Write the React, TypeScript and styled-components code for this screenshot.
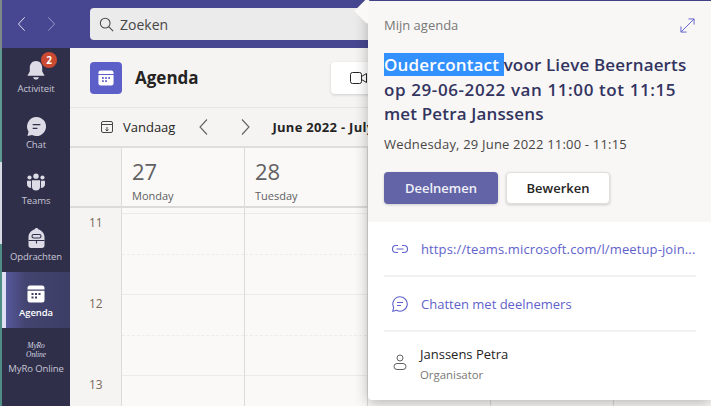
import * as React from "react";
import styled, { createGlobalStyle } from "styled-components";

const GlobalStyle = createGlobalStyle`
	html, body {
		margin: 0;
		padding: 0;
		background: #f5f4f3;
	}
	* {
		box-sizing: border-box;
	}
`;

const Window = styled.div`
	position: relative;
	display: flex;
	width: 711px;
	height: 406px;
	overflow: hidden;
	font-family: "Open Sans", "Noto Sans", sans-serif;
	color: #252423;
`;

const DesktopEdge = styled.div`
	flex: 0 0 2px;
	background: linear-gradient(#7d8a8a 0 12%, #5f9a92 12% 40%, #d7dbe3 40% 60%, #4f8d86 60% 100%);
`;

const Shell = styled.div`
	flex: 1;
	display: flex;
	flex-direction: column;
	min-width: 0;
`;

const TopBar = styled.header`
	flex: 0 0 48px;
	display: flex;
	align-items: center;
	background: #464790;
`;

const HistoryNav = styled.div`
	flex: 0 0 88px;
	display: flex;
	align-items: center;
	gap: 13px;
	padding-left: 12px;
`;

const SearchBox = styled.div`
	width: 300px;
	height: 32px;
	display: flex;
	align-items: center;
	gap: 6px;
	padding-left: 9px;
	background: #ebebeb;
	border-radius: 4px 0 0 4px;
	font-size: 14px;
	color: #484644;
`;

const Body = styled.div`
	flex: 1;
	display: flex;
	min-height: 0;
`;

const Rail = styled.nav`
	flex: 0 0 68px;
	display: flex;
	flex-direction: column;
	background: #2f2f4a;
`;

const RailItem = styled.div<{ $active?: boolean }>`
	position: relative;
	height: 56px;
	display: flex;
	flex-direction: column;
	align-items: center;
	padding-top: 10px;
	font-size: 9.5px;
	line-height: 13px;
	letter-spacing: -0.1px;
	color: ${(p) => (p.$active ? "#ffffff" : "#c8c6d4")};
	font-weight: ${(p) => (p.$active ? 600 : 400)};
	background: ${(p) => (p.$active ? "linear-gradient(90deg, #5a5ca6 0%, #43446f 35%, #3d3e66 100%)" : "transparent")};
	box-shadow: ${(p) => (p.$active ? "inset 4px 0 0 #dfe0f3" : "none")};
`;

const RailIcon = styled.div`
	height: 24px;
	display: flex;
	align-items: center;
	justify-content: center;
`;

const Badge = styled.span`
	position: absolute;
	top: 4px;
	left: 39px;
	width: 16px;
	height: 16px;
	border-radius: 50%;
	background: #cc4a31;
	color: #fff;
	font-size: 10px;
	font-weight: 700;
	line-height: 16px;
	text-align: center;
`;

const MyRoLogo = styled.div`
	font-family: "Liberation Serif", serif;
	font-style: italic;
	font-size: 7.5px;
	line-height: 9px;
	text-align: center;
	color: #d8d7e2;
`;

const Main = styled.main`
	flex: 1;
	display: flex;
	flex-direction: column;
	min-width: 0;
`;

const PageHeader = styled.div`
	flex: 0 0 60px;
	display: flex;
	align-items: center;
	padding-left: 20px;
	background: #f5f4f3;
	border-bottom: 1px solid #e6e5e4;
`;

const AppTile = styled.div`
	width: 32px;
	height: 32px;
	display: flex;
	align-items: center;
	justify-content: center;
	border-radius: 4px;
	background: #5b5fc7;
`;

const PageTitle = styled.h1`
	margin: 0 0 0 13px;
	width: 196px;
	font-size: 17px;
	font-weight: 700;
	color: #252423;
`;

const MeetButton = styled.div`
	width: 60px;
	height: 32px;
	display: flex;
	align-items: center;
	padding-left: 19px;
	background: #fff;
	border-radius: 4px;
	box-shadow: 0 1px 3px rgba(0, 0, 0, 0.16);
`;

const Toolbar = styled.div`
	flex: 0 0 40px;
	display: flex;
	align-items: center;
	padding-left: 30px;
	background: #f5f4f3;
	border-bottom: 2px solid #dfdedd;
	font-size: 13px;
`;

const TodayLabel = styled.span`
	margin: 0 20px 0 9px;
`;

const WeekArrows = styled.div`
	display: flex;
	align-items: center;
	gap: 23px;
	margin-right: 18px;
`;

const RangeLabel = styled.span`
	font-weight: 700;
	letter-spacing: 0.3px;
	white-space: nowrap;
`;

const Calendar = styled.div`
	flex: 1;
	display: grid;
	grid-template-columns: 51px 123px 123px 123px 123px 123px;
	grid-template-rows: 60px 1fr;
	background: #faf9f8;
	min-height: 0;
`;

const DayHead = styled.div<{ $corner?: boolean }>`
	padding: 9px 0 0 10px;
	background: ${(p) => (p.$corner ? "#f5f4f3" : "#faf9f8")};
	border-left: ${(p) => (p.$corner ? "0" : "1px solid #dcdbda")};
	border-bottom: 2px solid #dcdbda;
`;

const DayNumber = styled.div`
	font-size: 22px;
	line-height: 28px;
	color: #616161;
`;

const DayName = styled.div`
	margin-top: 3px;
	font-size: 11px;
	line-height: 15px;
	color: #616161;
`;

const HourColumn = styled.div`
	display: flex;
	flex-direction: column;
	background: #f5f4f3;
`;

const HourLabel = styled.div`
	flex: 0 0 81px;
	padding: 7px 0 0 19px;
	font-size: 12px;
	line-height: 16px;
	color: #7a6a5a;
`;

const DayColumn = styled.div`
	display: flex;
	flex-direction: column;
	padding-top: 5px;
	border-left: 1px solid #dcdbda;
`;

const Slot = styled.div<{ $half?: boolean }>`
	flex: 0 0 40.5px;
	border-top: 1px ${(p) => (p.$half ? "dashed #eeedec" : "solid #ecebea")};
`;

const Popover = styled.aside`
	position: absolute;
	top: 1px;
	left: 368px;
	width: 343px;
	height: 399px;
	display: flex;
	flex-direction: column;
	background: #fff;
	border-radius: 0 0 0 4px;
	box-shadow: 0 3px 14px rgba(0, 0, 0, 0.28);

	&::before {
		content: "";
		position: absolute;
		top: 1px;
		left: -10px;
		width: 18px;
		height: 18px;
		background: #faf9f8;
		transform: rotate(45deg);
	}
`;

const PopoverTop = styled.div`
	position: relative;
	flex: 0 0 221px;
	padding: 14px 16px 0;
	background: #f8f7f6;
`;

const PopoverMeta = styled.div`
	display: flex;
	align-items: center;
	justify-content: space-between;
	height: 20px;
	font-size: 13px;
	color: #7a7876;
`;

const EventTitle = styled.h2`
	margin: 18px 0 0;
	font-size: 17px;
	line-height: 24.5px;
	font-weight: 600;
	color: #33345f;
	white-space: nowrap;
`;

const TitleLine = styled.span<{ $spacing?: number }>`
	display: block;
	letter-spacing: ${(p) => p.$spacing ?? 0}px;
`;

const Selected = styled.span`
	background: #3390ff;
	color: #fff;
`;

const EventTime = styled.div`
	margin-top: 9px;
	font-size: 13px;
	line-height: 16px;
	letter-spacing: 0.19px;
	color: #484644;
`;

const Actions = styled.div`
	display: flex;
	gap: 8px;
	margin-top: 20px;
`;

const Button = styled.button<{ $primary?: boolean }>`
	height: 32px;
	width: ${(p) => (p.$primary ? "114px" : "104px")};
	padding: 0;
	border: ${(p) => (p.$primary ? "0" : "1px solid #e1dfdd")};
	border-radius: 4px;
	background: ${(p) => (p.$primary ? "#6264a7" : "#fff")};
	color: ${(p) => (p.$primary ? "#f0f0f8" : "#252423")};
	font-family: inherit;
	font-size: 13px;
	font-weight: 600;
	box-shadow: 0 1px 3px rgba(0, 0, 0, 0.18);
`;

const DetailList = styled.div`
	flex: 1;
	display: flex;
	flex-direction: column;
	padding: 0 15px 0 16px;
`;

const DetailRow = styled.div<{ $link?: boolean; $tall?: boolean }>`
	flex: ${(p) => (p.$tall ? "1" : "0 0 55px")};
	display: flex;
	align-items: ${(p) => (p.$tall ? "flex-start" : "center")};
	gap: ${(p) => (p.$tall ? "12px" : "13px")};
	padding: ${(p) => (p.$tall ? "13px 0 0 8px" : "0 0 0 8px")};
	color: ${(p) => (p.$link ? "#5f62cc" : "#252423")};
	font-size: 13px;
	border-bottom: ${(p) => (p.$link ? "2px solid #f3f2f1" : "0")};
	white-space: nowrap;
`;

const LinkText = styled.span`
	letter-spacing: 0.12px;
`;

const IconSlot = styled.span<{ $down?: boolean }>`
	display: flex;
	margin-top: ${(p) => (p.$down ? "9px" : "0")};
`;

const SubLabel = styled.div`
	margin-top: 4px;
	font-size: 11.4px;
	color: #7a7876;
`;

function Chevron({ dir, color, size = 18 }: { dir: "left" | "right"; color: string; size?: number }) {
	return (
		<svg width={size} height={size} viewBox="0 0 18 18" fill="none" stroke={color} strokeWidth="1.1">
			<path d={dir === "left" ? "M12 1.500 L5 9 L12 16.500" : "M6 1.500 L13 9 L6 16.500"} />
		</svg>
	);
}

function BellIcon() {
	return (
		<svg width="20" height="21" viewBox="0 0 20 22" fill="#dcdbe6">
			<path d="M10 1c4 0 6.500 3 6.500 7v4l2.500 4.500H1L3.500 12V8C3.500 4 6 1 10 1z" />
			<path d="M7 18h6c-.4 1.500-1.500 2.500-3 2.500S7.400 19.500 7 18z" />
		</svg>
	);
}

function ChatIcon() {
	return (
		<svg width="21" height="21" viewBox="0 0 22 22">
			<path fill="#dcdbe6" d="M11 1a10 10 0 1 1-4.600 18.900L1.500 21l1.200-4.600A10 10 0 0 1 11 1z" />
			<path stroke="#2f2f4a" strokeWidth="1.400" d="M7 9h8M7 13h5" />
		</svg>
	);
}

function TeamsIcon() {
	return (
		<svg width="20" height="18" viewBox="0 0 22 20" fill="#dcdbe6">
			<circle cx="11" cy="3.500" r="3" />
			<circle cx="3.800" cy="5" r="2.300" />
			<circle cx="18.200" cy="5" r="2.300" />
			<path d="M6.500 8h9v7a4.500 4.500 0 0 1-9 0z" />
			<path d="M1 8.500h4.500V15c0 .7.100 1.300.3 1.800C3 16.800 1 15 1 12.500zM21 8.500h-4.500V15c0 .7-.1 1.300-.3 1.800 2.800 0 4.800-1.800 4.800-4.300z" />
		</svg>
	);
}

function BackpackIcon() {
	return (
		<svg width="17" height="20" viewBox="0 0 17 20">
			<path fill="#dcdbe6" d="M8.500 0c.8 0 1.400.5 1.700 1.200C13.800 2.300 16.500 5.400 16.500 9v8.500c0 1.300-1 2.500-2.500 2.500H3c-1.500 0-2.500-1.200-2.500-2.500V9c0-3.600 2.700-6.700 6.300-7.800C7.100.5 7.700 0 8.500 0z" />
			<rect x="4" y="6.500" width="9" height="3.500" rx="1.750" fill="none" stroke="#2f2f4a" strokeWidth="1.100" />
			<path stroke="#2f2f4a" strokeWidth="1.100" fill="none" d="M.5 12.500h16M8.500 12.500v3" />
		</svg>
	);
}

function CalendarGlyph({ size, color, dots }: { size: number; color: string; dots: string }) {
	return (
		<svg width={size} height={size} viewBox="0 0 18 18">
			<path fill={color} d="M3 0.500h12A2.500 2.500 0 0 1 17.500 3v1.500H.5V3A2.500 2.500 0 0 1 3 .5z" />
			<path fill={color} d="M.5 5.700h17V15a2.500 2.500 0 0 1-2.500 2.500H3A2.500 2.500 0 0 1 .5 15z" />
			<g fill={dots}>
				<rect x="4.500" y="8" width="2" height="2" />
				<rect x="8" y="8" width="2" height="2" />
				<rect x="11.500" y="8" width="2" height="2" />
				<rect x="4.500" y="11.500" width="2" height="2" />
				<rect x="8" y="11.500" width="2" height="2" />
			</g>
		</svg>
	);
}

const hours = ["11", "12", "13"];
const slots = [false, true, false, true, false, true, false];

function DayCol() {
	return (
		<DayColumn>
			{slots.map((half, i) => (
				<Slot key={i} $half={half} />
			))}
		</DayColumn>
	);
}

export default function App() {
	return (
		<Window>
			<GlobalStyle />
			<DesktopEdge />
			<Shell>
				<TopBar>
					<HistoryNav>
						<Chevron dir="left" color="#e4e4f2" size={16} />
						<Chevron dir="right" color="#9a9bcb" size={16} />
					</HistoryNav>
					<SearchBox>
						<svg width="15" height="15" viewBox="0 0 17 17" fill="none" stroke="#484644" strokeWidth="1.200">
							<circle cx="7" cy="7" r="5.500" />
							<path d="M11 11l5 5" />
						</svg>
						Zoeken
					</SearchBox>
				</TopBar>
				<Body>
					<Rail>
						<RailItem>
							<RailIcon>
								<BellIcon />
							</RailIcon>
							Activiteit
							<Badge>2</Badge>
						</RailItem>
						<RailItem>
							<RailIcon>
								<ChatIcon />
							</RailIcon>
							Chat
						</RailItem>
						<RailItem>
							<RailIcon>
								<TeamsIcon />
							</RailIcon>
							Teams
						</RailItem>
						<RailItem>
							<RailIcon>
								<BackpackIcon />
							</RailIcon>
							Opdrachten
						</RailItem>
						<RailItem $active>
							<RailIcon>
								<CalendarGlyph size={18} color="#ffffff" dots="#3d3e66" />
							</RailIcon>
							Agenda
						</RailItem>
						<RailItem>
							<RailIcon>
								<MyRoLogo>
									MyRo
									<br />
									Online
								</MyRoLogo>
							</RailIcon>
							MyRo Online
						</RailItem>
					</Rail>
					<Main>
						<PageHeader>
							<AppTile>
								<CalendarGlyph size={16} color="#ffffff" dots="#5b5fc7" />
							</AppTile>
							<PageTitle>Agenda</PageTitle>
							<MeetButton>
								<svg width="18" height="12" viewBox="0 0 18 12" fill="none" stroke="#252423" strokeWidth="1">
									<rect x="0.500" y="0.500" width="11" height="11" rx="2" />
									<path d="M11.500 4.500l5-3v9l-5-3" />
								</svg>
							</MeetButton>
						</PageHeader>
						<Toolbar>
							<svg width="14" height="14" viewBox="0 0 14 14" fill="none" stroke="#484644" strokeWidth="1">
								<rect x="1.500" y="1.500" width="11" height="11" rx="1.500" />
								<path d="M1.500 4.500h11M7 7v4M5.500 9.500L7 11l1.500-1.500" />
							</svg>
							<TodayLabel>Vandaag</TodayLabel>
							<WeekArrows>
								<Chevron dir="left" color="#616161" />
								<Chevron dir="right" color="#616161" />
							</WeekArrows>
							<RangeLabel>June 2022 - July 2022</RangeLabel>
						</Toolbar>
						<Calendar>
							<DayHead $corner />
							<DayHead>
								<DayNumber>27</DayNumber>
								<DayName>Monday</DayName>
							</DayHead>
							<DayHead>
								<DayNumber>28</DayNumber>
								<DayName>Tuesday</DayName>
							</DayHead>
							<DayHead />
							<DayHead />
							<DayHead />
							<HourColumn>
								{hours.map((h) => (
									<HourLabel key={h}>{h}</HourLabel>
								))}
							</HourColumn>
							<DayCol />
							<DayCol />
							<DayCol />
							<DayCol />
							<DayCol />
						</Calendar>
					</Main>
				</Body>
			</Shell>
			<Popover>
				<PopoverTop>
					<PopoverMeta>
						Mijn agenda
						<svg width="15" height="15" viewBox="0 0 16 16" fill="none" stroke="#5b5fc7" strokeWidth="1">
							<path d="M1 15L15 1M9 1h6v6M1 9v6h6" />
						</svg>
					</PopoverMeta>
					<EventTitle>
						<TitleLine $spacing={0.15}>
							<Selected>Oudercontact </Selected>voor Lieve Beernaerts
						</TitleLine>
						<TitleLine $spacing={0.6}>op 29-06-2022 van 11:00 tot 11:15</TitleLine>
						<TitleLine $spacing={0.15}>met Petra Janssens</TitleLine>
					</EventTitle>
					<EventTime>Wednesday, 29 June 2022 11:00 - 11:15</EventTime>
					<Actions>
						<Button $primary>Deelnemen</Button>
						<Button>Bewerken</Button>
					</Actions>
				</PopoverTop>
				<DetailList>
					<DetailRow $link>
						<IconSlot>
							<svg width="16" height="16" viewBox="0 0 16 16" fill="none" stroke="#5f62cc" strokeWidth="1.100">
								<path d="M6 4.500H4a3.500 3.500 0 0 0 0 7h2M10 4.500h2a3.500 3.500 0 0 1 0 7h-2M4.500 8h7" />
							</svg>
						</IconSlot>
						<LinkText>https://teams.microsoft.com/l/meetup-join...</LinkText>
					</DetailRow>
					<DetailRow $link>
						<IconSlot>
							<svg width="16" height="16" viewBox="0 0 16 16" fill="none" stroke="#5f62cc" strokeWidth="1.100">
								<path d="M8 .8a7.200 7.200 0 1 1-3.400 13.500L.8 15.200l.9-3.800A7.200 7.200 0 0 1 8 .8z" />
								<path d="M5 6.500h6M5 9.500h4" />
							</svg>
						</IconSlot>
						Chatten met deelnemers
					</DetailRow>
					<DetailRow $tall>
						<IconSlot $down>
							<svg width="16" height="16" viewBox="0 0 16 16" fill="none" stroke="#616161" strokeWidth="1">
								<circle cx="8" cy="4" r="3" />
								<rect x="2" y="9.500" width="12" height="6" rx="3" />
							</svg>
						</IconSlot>
						<div>
							Janssens Petra
							<SubLabel>Organisator</SubLabel>
						</div>
					</DetailRow>
				</DetailList>
			</Popover>
		</Window>
	);
}
